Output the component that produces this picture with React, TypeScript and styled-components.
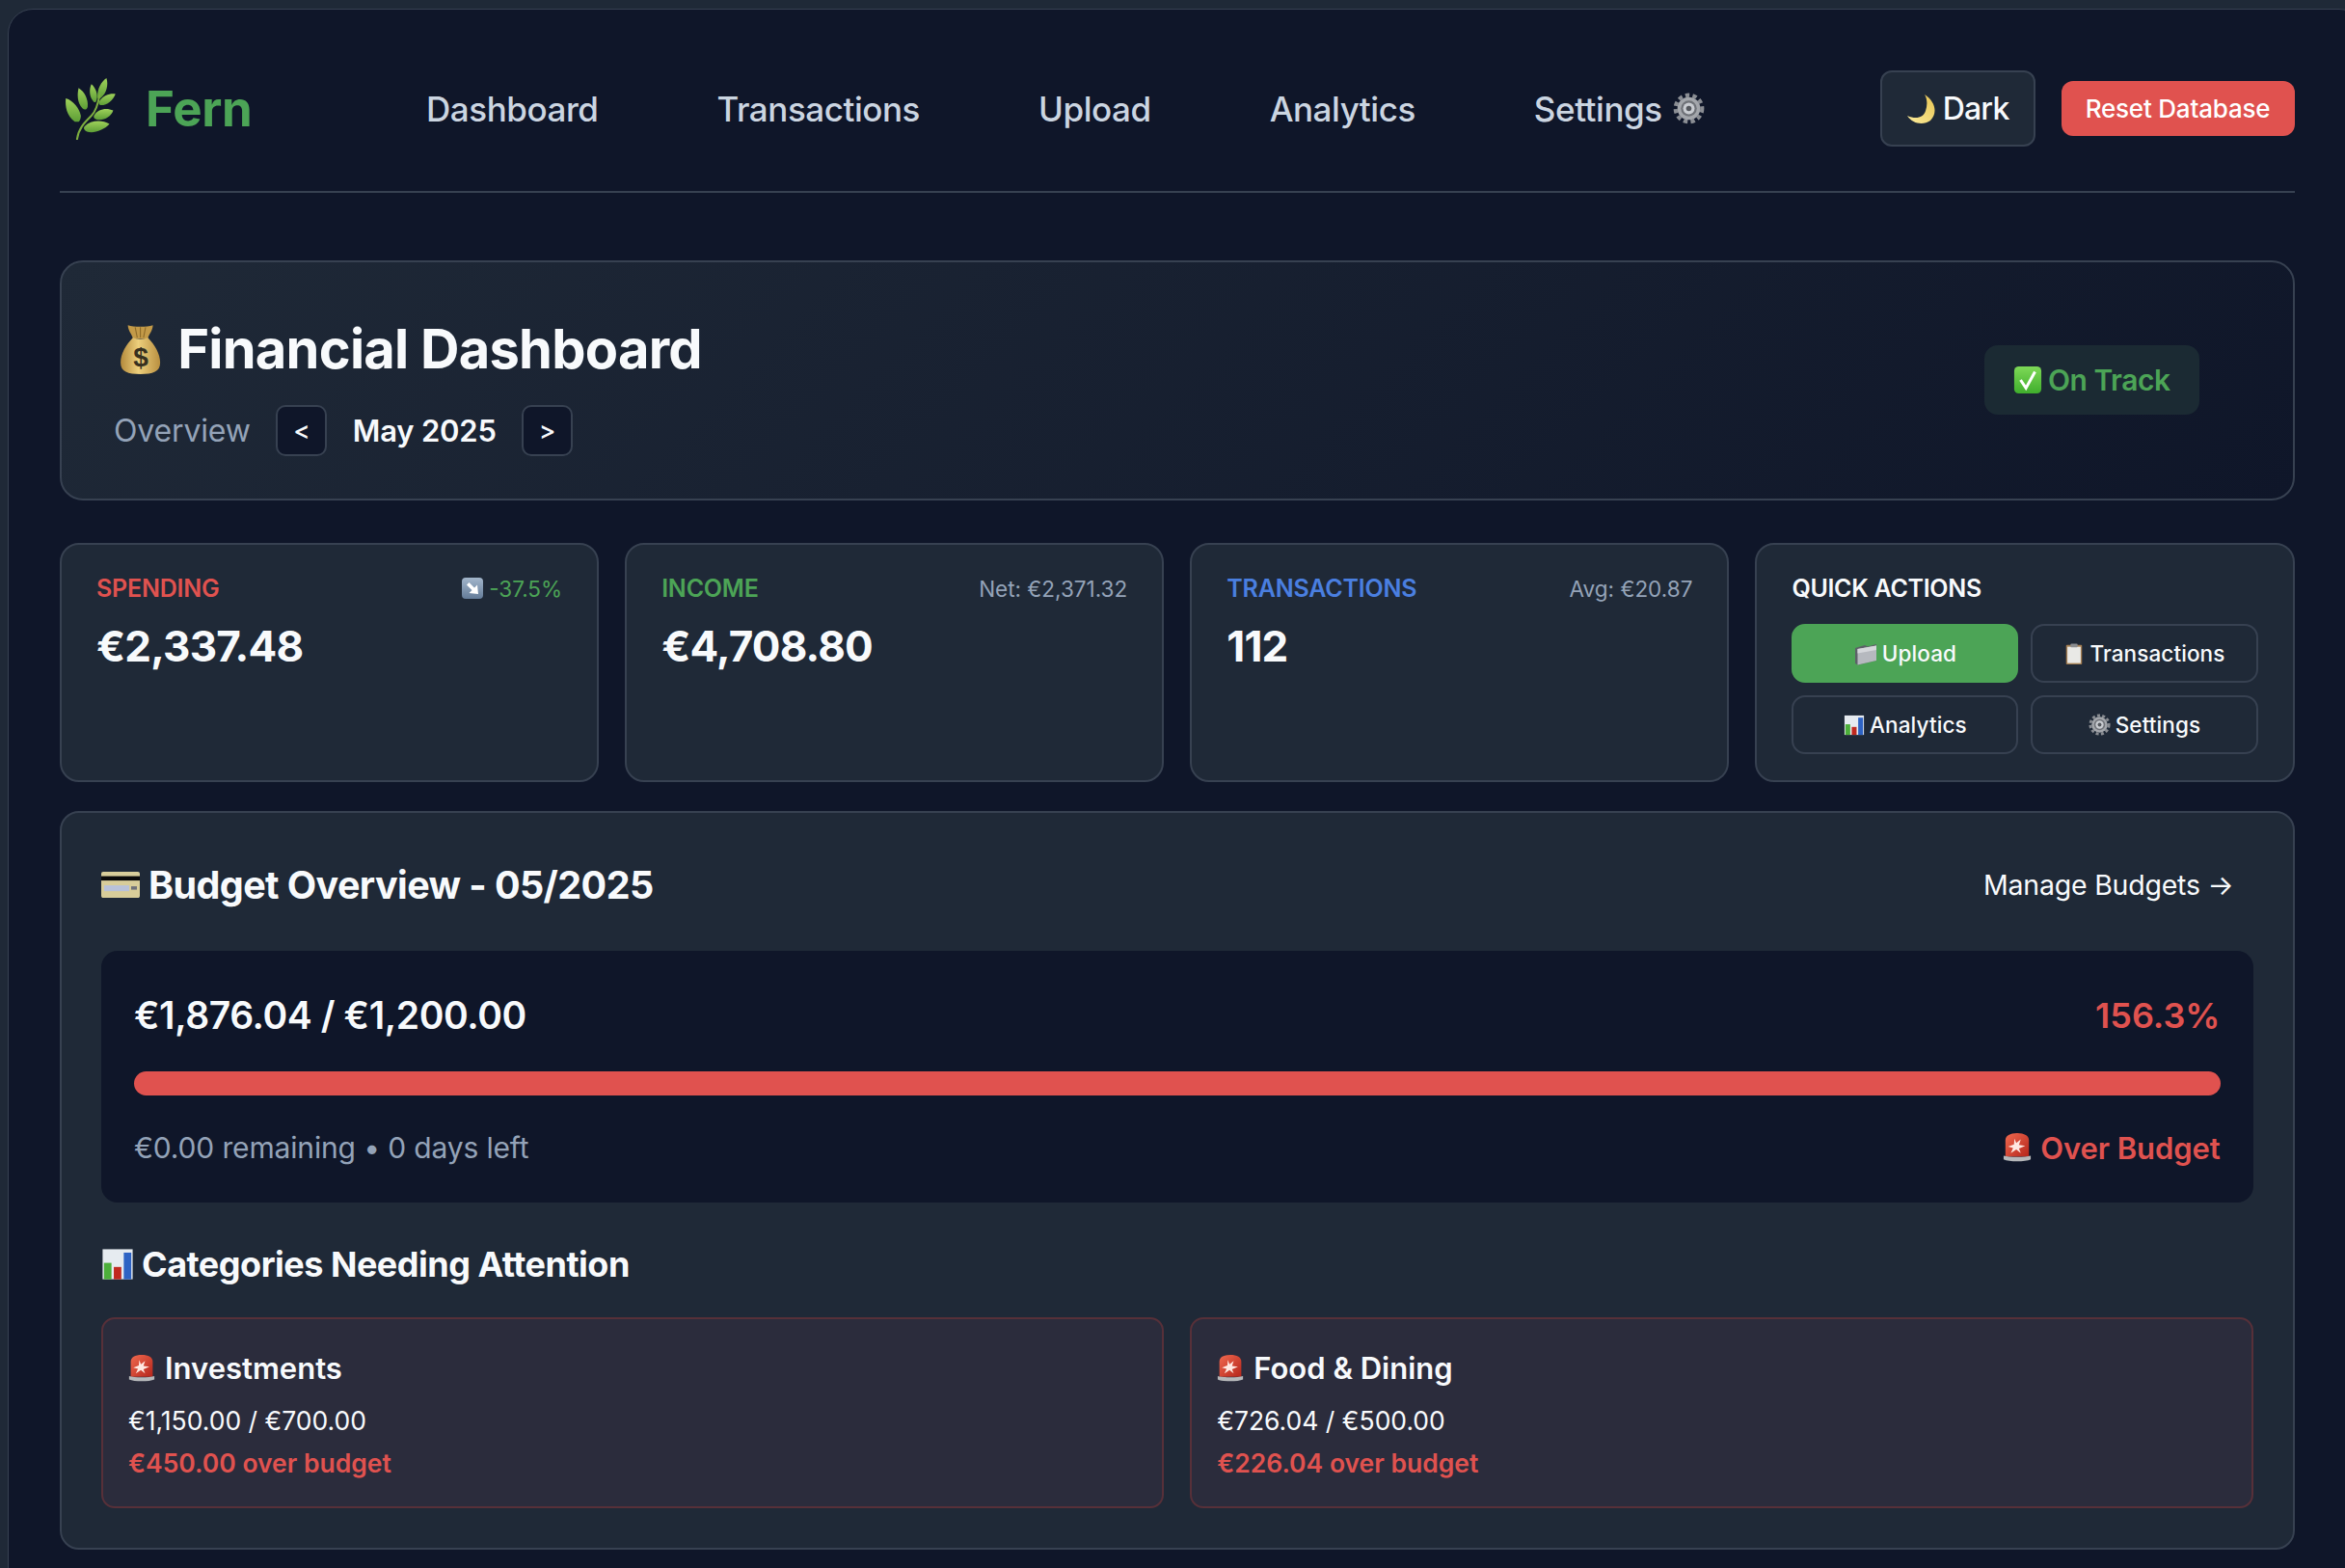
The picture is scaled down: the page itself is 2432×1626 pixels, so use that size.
import styled, { createGlobalStyle } from "styled-components";

const GlobalStyle = createGlobalStyle`
  html, body {
    margin: 0;
    height: 100%;
    overflow: hidden;
    background: #1f2937;
    font-family: Inter, "Liberation Sans", sans-serif;
    -webkit-font-smoothing: antialiased;
  }
`;

/* ---------- emoji drawings ---------- */

function Herb({ size }: { size: number }) {
  const leaves = [
    "M14 58 C3 50 1 38 2 27 C12 30 20 40 22 50 C22 54 20 59 18 58Z",
    "M24 40 C17 32 17 22 19 13 C27 18 32 28 31 38 C30 42 27 43 24 40Z",
    "M38 30 C33 24 33 14 36 8 C42 13 45 22 43 29 C42 33 40 33 38 30Z",
    "M44 25 C44 14 49 5 56 0 C59 9 56 20 49 26 C47 28 44 28 44 25Z",
    "M47 30 C52 23 60 20 68 21 C65 29 57 36 49 36 C46 36 45 33 47 30Z",
    "M40 49 C45 41 56 39 65 43 C62 52 52 57 43 55 C40 54 38 52 40 49Z",
    "M27 64 C35 56 50 55 60 61 C52 70 38 74 30 71 C26 69 25 66 27 64Z",
  ];
  return (
    <svg width={size} height={size} viewBox="0 0 70 82" style={{ flexShrink: 0 }}>
      <defs>
        <linearGradient id="herbLeaf" x1="0" y1="0" x2="0" y2="1">
          <stop offset="0" stopColor="#9fd15a" />
          <stop offset="1" stopColor="#5d9e36" />
        </linearGradient>
      </defs>
      {leaves.map((d) => (
        <path key={d} d={d} fill="url(#herbLeaf)" />
      ))}
      <path d="M17 81 C19 66 28 58 36 50 C42 44 45 34 47 22" fill="none" stroke="#7dae3f" strokeWidth="2.6" strokeLinecap="round" />
    </svg>
  );
}

function MoneyBag({ size }: { size: number }) {
  return (
    <svg width={size * 0.8} height={size} viewBox="0 0 40 50">
      <defs>
        <linearGradient id="bagBody" x1="0" y1="0" x2="1" y2="0">
          <stop offset="0" stopColor="#b48a3c" />
          <stop offset="0.45" stopColor="#edcf7c" />
          <stop offset="1" stopColor="#b98f40" />
        </linearGradient>
      </defs>
      <path d="M8 2 C14 4 26 4 32 2 C32 7 28 11 27 15 L13 15 C12 11 8 7 8 2Z" fill="#c39a48" />
      <path d="M15 4 L17 14 M20 4 L20 14 M25 4 L23 14" stroke="#8d6a28" strokeWidth="1" />
      <path d="M13 14 C16 16 24 16 27 14 C34 21 39 30 39 38 C39 47 32 49 20 49 C8 49 1 47 1 38 C1 30 6 21 13 14Z" fill="url(#bagBody)" />
      <text x="20" y="42" textAnchor="middle" fontFamily="Liberation Sans, sans-serif" fontWeight="700" fontSize="26" fill="#37301f">$</text>
    </svg>
  );
}

function Gear({ size }: { size: number }) {
  return (
    <svg width={size} height={size} viewBox="0 0 32 32">
      <circle cx="16" cy="16" r="13.4" fill="none" stroke="#8a8d93" strokeWidth="4" strokeDasharray="4.2 3.2" />
      <circle cx="16" cy="16" r="11.5" fill="#a3a6ab" />
      <circle cx="16" cy="16" r="8" fill="#6f7278" />
      <circle cx="16" cy="16" r="5.8" fill="#c9ccd1" />
      <circle cx="16" cy="16" r="2.7" fill="#55585e" />
    </svg>
  );
}

function Moon({ size }: { size: number }) {
  return (
    <svg width={size} height={size} viewBox="0 0 32 32">
      <defs>
        <linearGradient id="moonFill" x1="1" y1="0" x2="0" y2="1">
          <stop offset="0" stopColor="#e8c552" />
          <stop offset="1" stopColor="#fbeb9c" />
        </linearGradient>
      </defs>
      <path d="M19 1 C30 8 33 20 25 28 C18 33 7 32 1 23 C10 27 18 25 20 18 C22 12 22 6 19 1Z" fill="url(#moonFill)" />
    </svg>
  );
}

function CheckBox({ size }: { size: number }) {
  return (
    <svg width={size} height={size} viewBox="0 0 32 32">
      <defs>
        <linearGradient id="checkFill" x1="0" y1="0" x2="0" y2="1">
          <stop offset="0" stopColor="#7ed957" />
          <stop offset="1" stopColor="#3fae2c" />
        </linearGradient>
      </defs>
      <rect x="1" y="1" width="30" height="30" rx="5" fill="url(#checkFill)" />
      <path d="M8 16 L14 25 L24 7" fill="none" stroke="#fff" strokeWidth="3.2" />
    </svg>
  );
}

function ArrowBox({ size }: { size: number }) {
  return (
    <svg width={size} height={size} viewBox="0 0 24 24">
      <defs>
        <linearGradient id="arrowFill" x1="0" y1="0" x2="0" y2="1">
          <stop offset="0" stopColor="#a3b6cb" />
          <stop offset="1" stopColor="#647c99" />
        </linearGradient>
      </defs>
      <rect x="1" y="1" width="22" height="22" rx="4" fill="url(#arrowFill)" />
      <path d="M6 8.5 L8.5 6 L14 11.5 L17 8.5 L18 18 L8.5 17 L11.5 14Z" fill="#fff" />
    </svg>
  );
}

function Folder({ size }: { size: number }) {
  return (
    <svg width={size} height={size} viewBox="0 0 24 24">
      <path d="M1 6 L1 22 L4 23.5 L23 19 L23 2 L14 4.5 L11 3Z" fill="#5d6168" />
      <path d="M3.5 7 L23 3.5 L23 19 L3.5 23.5Z" fill="#b6b9bf" />
      <path d="M3.5 7 L23 3.5 L23 8 L3.5 11.5Z" fill="#d5d7db" />
    </svg>
  );
}

function Clipboard({ size }: { size: number }) {
  return (
    <svg width={size} height={size} viewBox="0 0 24 24">
      <rect x="3" y="2" width="18" height="22" rx="1" fill="#a37e52" />
      <rect x="4.5" y="4" width="15" height="18.5" fill="#e9e9e6" />
      <rect x="8" y="0.5" width="8" height="4" rx="1" fill="#8b8d90" />
    </svg>
  );
}

function BarChart({ size }: { size: number }) {
  return (
    <svg width={size} height={size} viewBox="0 0 24 24">
      <rect x="1" y="1" width="22" height="22" fill="#e6ebf0" />
      <rect x="2" y="11" width="5.5" height="12" fill="#4caf3a" />
      <rect x="9.2" y="14" width="5.5" height="9" fill="#c1291f" />
      <rect x="16.5" y="3.5" width="5.5" height="19.5" fill="#2e63c4" />
    </svg>
  );
}

function CreditCard({ size }: { size: number }) {
  return (
    <svg width={size} height={size * 0.68} viewBox="0 0 40 27">
      <rect x="0" y="0" width="40" height="27" rx="2" fill="#d8cd9a" />
      <rect x="0" y="4.5" width="40" height="4.5" fill="#0b0b0b" />
      <rect x="3" y="14" width="26" height="6" fill="#b9c2d9" />
      <rect x="31" y="15" width="6" height="3.5" fill="#6f7179" />
    </svg>
  );
}

function Siren({ size }: { size: number }) {
  return (
    <svg width={size} height={size} viewBox="0 0 32 32">
      <defs>
        <linearGradient id="sirenDome" x1="0" y1="0" x2="1" y2="1">
          <stop offset="0" stopColor="#f0694f" />
          <stop offset="1" stopColor="#b5261c" />
        </linearGradient>
      </defs>
      <path d="M3 26 L3 8 C3 3 8 0 16 0 C24 0 29 3 29 8 L29 26Z" fill="url(#sirenDome)" />
      <path d="M13 6 L15 11 L20 7 L18 13 L25 14 L18 17 L20 22 L15 18 L9 22 L11.5 16.5 L6 15 L12.5 12.5Z" fill="#ffe9e2" />
      <path d="M1 25 C7 27 25 27 31 25 L31 29 C25 32 7 32 1 29Z" fill="#b6b8ba" />
    </svg>
  );
}

/* ---------- page ---------- */

const Frame = styled.div`
  box-sizing: border-box;
  height: 1700px;
  margin: 9px -20px 0 8px;
  padding: 0 71.5px 0 53px;
  background: #0f1629;
  border: 1.5px solid #374151;
  border-radius: 26px;
`;

const Header = styled.header`
  display: flex;
  align-items: center;
  box-sizing: border-box;
  height: 189.5px;
  padding-top: 18px;
  margin-bottom: 70.3px;
  border-bottom: 2px solid #374151;
`;

const Logo = styled.div`
  display: flex;
  align-items: center;
  gap: 25px;
  width: 196px;
  font-size: 51px;
  font-weight: 700;
  letter-spacing: -0.3px;
  color: #4ca456;
`;

const Nav = styled.nav`
  display: flex;
  align-items: center;
  gap: 123px;
  margin-left: 184px;
  flex: 1;
`;

const NavLink = styled.a`
  display: flex;
  align-items: center;
  gap: 11px;
  font-size: 35px;
  font-weight: 500;
  letter-spacing: -0.45px;
  color: #cbd5e1;
`;

const HeaderActions = styled.div`
  display: flex;
  align-items: center;
  gap: 27px;
`;

const ThemeButton = styled.button`
  display: flex;
  align-items: center;
  gap: 6px;
  height: 79px;
  padding: 0 25px;
  background: #1f2937;
  border: 2px solid #374151;
  border-radius: 12px;
  color: #f8fafc;
  font: 500 32px Inter, sans-serif;
  letter-spacing: -0.8px;
`;

const ResetButton = styled.button`
  height: 57px;
  width: 242px;
  background: #e0524f;
  border: 0;
  border-radius: 12px;
  color: #fff;
  font: 500 26px Inter, sans-serif;
  letter-spacing: -0.2px;
`;

const Hero = styled.section`
  display: flex;
  align-items: center;
  justify-content: space-between;
  height: 249px;
  box-sizing: border-box;
  padding: 0 97px 0 54px;
  margin-bottom: 44.4px;
  background: linear-gradient(135deg, #1f2937 0%, #0f1629 100%);
  border: 2px solid #374151;
  border-radius: 24px;
`;

const HeroMain = styled.div`
  padding-top: 12px;
`;

const HeroTitle = styled.h1`
  display: flex;
  align-items: center;
  gap: 17px;
  margin: 0 0 23.5px 6px;
  font-size: 56px;
  line-height: 68px;
  font-weight: 700;
  letter-spacing: -0.75px;
  color: #f8fafc;
`;

const PeriodRow = styled.div`
  display: flex;
  align-items: center;
  gap: 26.5px;
`;

const Overview = styled.span`
  font-size: 32px;
  letter-spacing: -0.15px;
  color: #94a3b8;
`;

const PeriodLabel = styled.span`
  font-size: 31px;
  font-weight: 600;
  letter-spacing: -0.2px;
  color: #f8fafc;
`;

const PeriodButton = styled.button`
  width: 53px;
  height: 53px;
  padding: 0;
  background: #0f1629;
  border: 2px solid #374151;
  border-radius: 10px;
  color: #f8fafc;
  font: 500 26px Inter, sans-serif;
`;

const StatusBadge = styled.div`
  display: flex;
  align-items: center;
  gap: 6px;
  height: 72px;
  padding: 0 30px;
  background: #1b2a33;
  border-radius: 14px;
  color: #4ca456;
  font-size: 30px;
  font-weight: 600;
  letter-spacing: -0.5px;
`;

const StatGrid = styled.div`
  display: grid;
  grid-template-columns: repeat(4, 1fr);
  gap: 27px;
  margin-bottom: 29.5px;
`;

const Card = styled.div`
  box-sizing: border-box;
  height: 248px;
  padding: 28px 36px;
  background: #1f2937;
  border: 2px solid #374151;
  border-radius: 20px;
`;

const StatHead = styled.div`
  display: flex;
  align-items: center;
  justify-content: space-between;
  height: 34px;
  margin-bottom: 15px;
`;

const StatLabel = styled.span<{ $color: string }>`
  font-size: 25px;
  font-weight: 600;
  letter-spacing: -0.2px;
  color: ${(p) => p.$color};
`;

const StatNote = styled.span<{ $color?: string }>`
  display: flex;
  align-items: center;
  gap: 5px;
  font-size: 22.5px;
  color: ${(p) => p.$color ?? "#94a3b8"};
`;

const StatValue = styled.div`
  font-size: 44px;
  line-height: 56px;
  font-weight: 700;
  letter-spacing: -0.8px;
  color: #f8fafc;
`;

const ActionsTitle = styled.div`
  height: 34px;
  margin-bottom: 20px;
  font-size: 25px;
  line-height: 34px;
  font-weight: 600;
  letter-spacing: -0.3px;
  color: #f8fafc;
`;

const ActionGrid = styled.div`
  display: grid;
  grid-template-columns: 1fr 1fr;
  grid-auto-rows: 61px;
  gap: 13px;
`;

const ActionButton = styled.button<{ $primary?: boolean }>`
  display: flex;
  align-items: center;
  justify-content: center;
  gap: 5px;
  padding: 0;
  background: ${(p) => (p.$primary ? "#4ca456" : "transparent")};
  border: 2px solid ${(p) => (p.$primary ? "#4ca456" : "#374151")};
  border-radius: 14px;
  color: #f8fafc;
  font: 500 22.5px Inter, sans-serif;
  letter-spacing: 0.1px;
`;

const BudgetCard = styled.section`
  box-sizing: border-box;
  height: 766px;
  padding: 40px 41px;
  background: #1f2937;
  border: 2px solid #374151;
  border-radius: 20px;
`;

const BudgetHead = styled.div`
  display: flex;
  align-items: center;
  justify-content: space-between;
  height: 70px;
  margin-bottom: 33.8px;
`;

const BudgetTitle = styled.h2`
  display: flex;
  align-items: center;
  gap: 9px;
  margin: 0;
  font-size: 39.5px;
  font-weight: 700;
  letter-spacing: -0.6px;
  color: #f8fafc;
`;

const ManageLink = styled.a`
  margin-right: 20px;
  font-size: 28.5px;
  letter-spacing: -0.22px;
  color: #f8fafc;
`;

const BudgetPanel = styled.div`
  box-sizing: border-box;
  height: 261px;
  padding: 40px 34px;
  background: #0f1629;
  border-radius: 17px;
`;

const PanelRow = styled.div`
  display: flex;
  align-items: center;
  justify-content: space-between;
`;

const Amount = styled.span`
  font-size: 39px;
  line-height: 54px;
  font-weight: 600;
  letter-spacing: -0.4px;
  color: #f8fafc;
`;

const Percent = styled.span`
  font-size: 36px;
  font-weight: 600;
  color: #e0524f;
`;

const BarTrack = styled.div`
  height: 25px;
  margin: 31px 0 34px;
  background: #e0524f;
  border-radius: 13px;
`;

const Remaining = styled.span`
  font-size: 30px;
  line-height: 40px;
  letter-spacing: -0.15px;
  color: #94a3b8;
`;

const OverBudget = styled.span`
  display: flex;
  align-items: center;
  gap: 9px;
  font-size: 31px;
  font-weight: 600;
  letter-spacing: -0.1px;
  color: #e0524f;
`;

const SectionTitle = styled.h3`
  display: flex;
  align-items: center;
  gap: 8px;
  margin: 40.5px 0 32.5px;
  height: 46px;
  font-size: 36px;
  font-weight: 650;
  letter-spacing: -0.5px;
  color: #f8fafc;
`;

const CategoryGrid = styled.div`
  display: grid;
  grid-template-columns: 1fr 1fr;
  gap: 27px;
`;

const CategoryCard = styled.div`
  box-sizing: border-box;
  height: 198px;
  padding: 28.5px 26px;
  background: #2b2c3c;
  border: 2px solid #573039;
  border-radius: 14px;
`;

const CategoryName = styled.div`
  display: flex;
  align-items: center;
  gap: 10px;
  height: 44px;
  margin-bottom: 12.5px;
  font-size: 31px;
  font-weight: 600;
  color: #f8fafc;
`;

const CategoryAmount = styled.div`
  font-size: 26.5px;
  line-height: 40px;
  margin-bottom: 3.5px;
  color: #f8fafc;
`;

const CategoryOver = styled.div`
  font-size: 26.5px;
  line-height: 40px;
  font-weight: 600;
  color: #e0524f;
`;

const categories = [
  { name: "Investments", amount: "€1,150.00 / €700.00", over: "€450.00 over budget" },
  { name: "Food & Dining", amount: "€726.04 / €500.00", over: "€226.04 over budget" },
];

export default function App() {
  return (
    <Frame>
      <GlobalStyle />
      <Header>
        <Logo>
          <Herb size={64} />
          Fern
        </Logo>
        <Nav>
          <NavLink>Dashboard</NavLink>
          <NavLink>Transactions</NavLink>
          <NavLink>Upload</NavLink>
          <NavLink>Analytics</NavLink>
          <NavLink>
            Settings <Gear size={33} />
          </NavLink>
        </Nav>
        <HeaderActions>
          <ThemeButton>
            <Moon size={32} />
            Dark
          </ThemeButton>
          <ResetButton>Reset Database</ResetButton>
        </HeaderActions>
      </Header>

      <Hero>
        <HeroMain>
          <HeroTitle>
            <MoneyBag size={54} />
            Financial Dashboard
          </HeroTitle>
          <PeriodRow>
            <Overview>Overview</Overview>
            <PeriodButton>&lt;</PeriodButton>
            <PeriodLabel>May 2025</PeriodLabel>
            <PeriodButton>&gt;</PeriodButton>
          </PeriodRow>
        </HeroMain>
        <StatusBadge>
          <CheckBox size={30} />
          On Track
        </StatusBadge>
      </Hero>

      <StatGrid>
        <Card>
          <StatHead>
            <StatLabel $color="#e0524f">SPENDING</StatLabel>
            <StatNote $color="#4ca456">
              <ArrowBox size={24} />
              -37.5%
            </StatNote>
          </StatHead>
          <StatValue>€2,337.48</StatValue>
        </Card>
        <Card>
          <StatHead>
            <StatLabel $color="#4ca456">INCOME</StatLabel>
            <StatNote>Net: €2,371.32</StatNote>
          </StatHead>
          <StatValue>€4,708.80</StatValue>
        </Card>
        <Card>
          <StatHead>
            <StatLabel $color="#4a7fe0">TRANSACTIONS</StatLabel>
            <StatNote>Avg: €20.87</StatNote>
          </StatHead>
          <StatValue>112</StatValue>
        </Card>
        <Card>
          <ActionsTitle>QUICK ACTIONS</ActionsTitle>
          <ActionGrid>
            <ActionButton $primary>
              <Folder size={24} />
              Upload
            </ActionButton>
            <ActionButton>
              <Clipboard size={22} />
              Transactions
            </ActionButton>
            <ActionButton>
              <BarChart size={22} />
              Analytics
            </ActionButton>
            <ActionButton>
              <Gear size={23} />
              Settings
            </ActionButton>
          </ActionGrid>
        </Card>
      </StatGrid>

      <BudgetCard>
        <BudgetHead>
          <BudgetTitle>
            <CreditCard size={40} />
            Budget Overview - 05/2025
          </BudgetTitle>
          <ManageLink>Manage Budgets →</ManageLink>
        </BudgetHead>
        <BudgetPanel>
          <PanelRow>
            <Amount>€1,876.04 / €1,200.00</Amount>
            <Percent>156.3%</Percent>
          </PanelRow>
          <BarTrack />
          <PanelRow>
            <Remaining>€0.00 remaining • 0 days left</Remaining>
            <OverBudget>
              <Siren size={30} />
              Over Budget
            </OverBudget>
          </PanelRow>
        </BudgetPanel>
        <SectionTitle>
          <BarChart size={34} />
          Categories Needing Attention
        </SectionTitle>
        <CategoryGrid>
          {categories.map((c) => (
            <CategoryCard key={c.name}>
              <CategoryName>
                <Siren size={28} />
                {c.name}
              </CategoryName>
              <CategoryAmount>{c.amount}</CategoryAmount>
              <CategoryOver>{c.over}</CategoryOver>
            </CategoryCard>
          ))}
        </CategoryGrid>
      </BudgetCard>
    </Frame>
  );
}
